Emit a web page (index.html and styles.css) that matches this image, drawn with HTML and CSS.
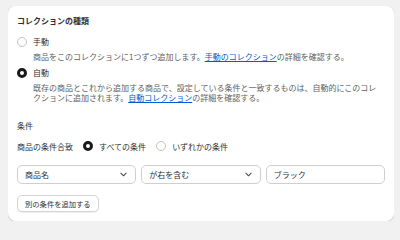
FILE: index.html
```html
<!DOCTYPE html>
<html lang="ja">
<head>
<meta charset="utf-8">
<link rel="stylesheet" href="styles.css">
</head>
<body>
<div class="card">
  <div class="title">コレクションの種類</div>
  <div class="choice">
    <span class="radio"></span><span class="label">手動</span>
  </div>
  <p class="desc">商品をこのコレクションに1つずつ追加します。<a href="#">手動のコレクション</a>の詳細を確認する。</p>
  <div class="choice choice2">
    <span class="radio checked"></span><span class="label">自動</span>
  </div>
  <p class="desc">既存の商品とこれから追加する商品で、設定している条件と一致するものは、自動的にこのコレクションに追加されます。<a href="#">自動コレクション</a>の詳細を確認する。</p>
  <div class="section">条件</div>
  <div class="match">
    <span class="match-label">商品の条件合致</span>
    <span class="radio checked"></span><span class="opt">すべての条件</span>
    <span class="radio r2"></span><span class="opt">いずれかの条件</span>
  </div>
  <div class="fields">
    <div class="field select"><span>商品名</span>
      <svg class="chev" viewBox="0 0 8 5" width="7" height="5"><path d="M1 1l3 3 3-3" fill="none" stroke="#4a4a4a" stroke-width="1.2" stroke-linecap="round" stroke-linejoin="round"/></svg>
    </div>
    <div class="field select"><span>が右を含む</span>
      <svg class="chev" viewBox="0 0 8 5" width="7" height="5"><path d="M1 1l3 3 3-3" fill="none" stroke="#4a4a4a" stroke-width="1.2" stroke-linecap="round" stroke-linejoin="round"/></svg>
    </div>
    <div class="field"><span>ブラック</span></div>
  </div>
  <button class="btn">別の条件を追加する</button>
</div>
</body>
</html>
```
FILE: styles.css
```css
html, body { background: #f1f1f1; }
body {
  margin: 6px 6px 0 8px;
  font-family: "Noto Sans CJK JP", "Noto Sans", sans-serif;
  color: #303030;
  font-size: 8px;
}
.card {
  background: #fff;
  border-radius: 8px;
  box-shadow: 0 1px 1px rgba(0,0,0,0.12), 0 0 0 1px rgba(0,0,0,0.04);
  padding: 9px 9px 9px 9px;
}
.title { font-weight: 700; line-height: 12px; }
.choice { display: flex; align-items: center; height: 12px; margin-top: 9px; }
.choice2 { margin-top: 5px; }
.label { margin-left: 6px; line-height: 12px; }
.radio {
  width: 10px; height: 10px; box-sizing: border-box;
  border-radius: 50%;
  border: 1px solid #c4c4c4;
  flex: none;
  display: inline-block;
}
.radio.checked { border: 3px solid #1a1a1a; }
.desc {
  margin: 4px 4px 0 16px;
  line-height: 10px;
  color: #616161;
}
.desc a { color: #005bd3; text-decoration: underline; }
.section { margin-top: 17px; line-height: 12px; }
.match { display: flex; align-items: center; height: 12px; margin-top: 8px; }
.match .radio { margin-left: 10px; }
.match .r2 { margin-left: 10px; }
.opt { margin-left: 6px; }
.fields {
  display: grid;
  grid-template-columns: 1fr 1fr 1fr;
  gap: 5px;
  margin-top: 13px;
}
.field {
  height: 19px; box-sizing: border-box;
  border: 1px solid #cfcfcf;
  border-radius: 5px;
  display: flex; align-items: center;
  padding: 0 8px 0 7px;
  justify-content: space-between;
}
.btn {
  margin-top: 11px;
  height: 17px;
  padding: 0 7px;
  font-family: inherit;
  font-size: 7.3px;
  color: #303030;
  background: #fff;
  border: 1px solid #d4d4d4;
  border-radius: 5px;
  box-shadow: 0 1px 0 rgba(0,0,0,0.06);
  display: block;
}
```
